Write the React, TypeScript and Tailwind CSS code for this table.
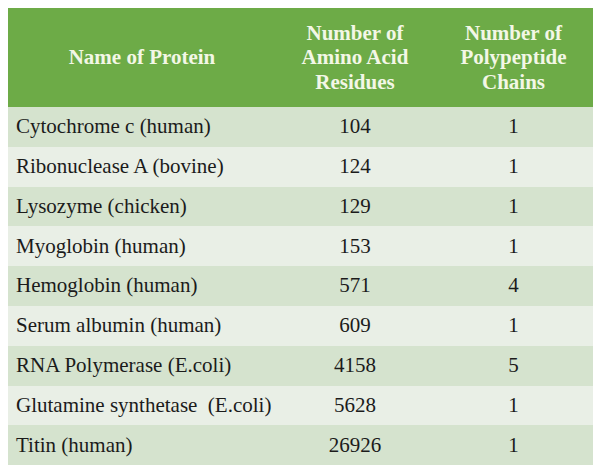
const rows: [string, string, string][] = [
  ['Cytochrome c (human)', '104', '1'],
  ['Ribonuclease A (bovine)', '124', '1'],
  ['Lysozyme (chicken)', '129', '1'],
  ['Myoglobin (human)', '153', '1'],
  ['Hemoglobin (human)', '571', '4'],
  ['Serum albumin (human)', '609', '1'],
  ['RNA Polymerase (E.coli)', '4158', '5'],
  ['Glutamine synthetase  (E.coli)', '5628', '1'],
  ['Titin (human)', '26926', '1'],
];

export default function App() {
  return (
    <div className="w-[600px] h-[471px] bg-white pt-[8px] pl-[8px]" style={{ fontFamily: '"Liberation Serif", serif' }}>
      <div className="w-[585px]">
        {/* Header */}
        <div className="grid grid-cols-[268px_158px_159px] h-[99px] bg-[#6dab47] text-[#f3f7e6] font-bold text-[21px] leading-[24.5px]">
          <div className="flex items-center justify-center">Name of Protein</div>
          <div className="flex items-center justify-center text-center">
            Number of<br />Amino Acid<br />Residues
          </div>
          <div className="flex items-center justify-center text-center">
            Number of<br />Polypeptide<br />Chains
          </div>
        </div>

        {/* Body rows */}
        {rows.map(([name, residues, chains], i) => (
          <div
            key={name}
            className={`grid grid-cols-[268px_158px_159px] h-[39.8px] items-center text-[21px] text-[#1b1b1b] ${
              i % 2 === 0 ? 'bg-[#d5e3ce]' : 'bg-[#e9efe6]'
            }`}
          >
            <div className="pl-[8px] whitespace-pre">{name}</div>
            <div className="text-center">{residues}</div>
            <div className="text-center">{chains}</div>
          </div>
        ))}
      </div>
    </div>
  );
}
